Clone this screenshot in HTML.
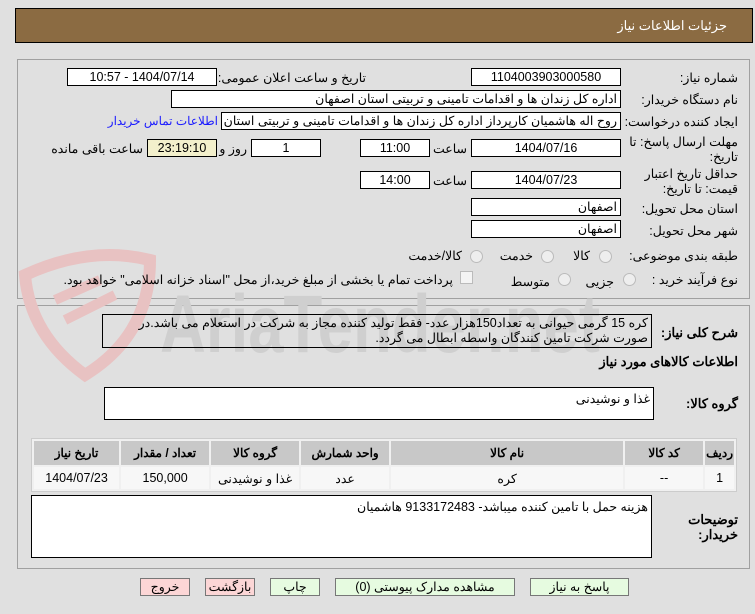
<!DOCTYPE html>
<html><head><meta charset="utf-8"><style>
body{margin:0;width:755px;height:614px;background:#e0e0e0;font-family:Tahoma,"Liberation Sans","Noto Sans CJK SC",sans-serif;font-size:12px;color:#000;position:relative;overflow:hidden;direction:rtl}
.a{position:absolute}
.hdr{left:15px;top:8px;width:738px;height:35px;background:#8b6b42;border:1px solid #000;box-sizing:border-box}
.hdr span{position:absolute;right:25px;top:9px;color:#fff;font-size:13px}
.pn{border:1px solid #a0a0a0;box-sizing:border-box}
.bx{position:absolute;background:#fff;border:1px solid #000;box-sizing:border-box;height:18px;line-height:16px;font-size:12.5px;padding:0 3px;white-space:nowrap;overflow:hidden}
.c{text-align:center}
.l{position:absolute;white-space:nowrap;font-size:12.5px}
.rad{position:absolute;width:11px;height:11px;border-radius:50%;border:1px solid #bbb;background:#eee}
.btn{position:absolute;top:578px;height:18px;border:1px solid #777;box-sizing:border-box;text-align:center;line-height:16px;font-size:12.5px}
table{position:absolute;left:31px;top:438px;width:706px;border-collapse:separate;border-spacing:2px;background:#f0f0f0;border:1px solid #ccc}
th{background:#c8c8c8;height:22px;font-size:12px}
td{background:#f7f7f7;height:20px;text-align:center;font-size:12.5px}
.b{font-weight:bold}
</style></head><body>
<div class="a hdr"><span>جزئیات اطلاعات نیاز</span></div>
<div class="a pn" style="left:17px;top:59px;width:733px;height:240px"></div>
<div class="a pn" style="left:17px;top:305px;width:733px;height:264px"></div>
<svg class="a" style="left:0;top:240px;direction:ltr" width="640" height="150">
<path d="M25 35 Q90 5 150 20 Q150 95 85 135 Q30 95 25 35Z" fill="none" stroke="#e8c2c2" stroke-width="12"/>
<path d="M55 60 L100 40 M65 80 L115 55" stroke="#e8c2c2" stroke-width="10"/>
<text x="160" y="112" font-size="82" fill="#cfcfcf" font-family="Liberation Sans" font-weight="bold" textLength="440" lengthAdjust="spacingAndGlyphs">AriaTender.net</text>
</svg>

<div class="l" style="right:17px;top:70px">شماره نیاز:</div>
<div class="bx c" style="left:471px;top:68px;width:150px">1104003903000580</div>
<div class="l" style="right:389px;top:70px">تاریخ و ساعت اعلان عمومی:</div>
<div class="bx c" style="left:67px;top:68px;width:150px">1404/07/14 - 10:57</div>

<div class="l" style="right:17px;top:92px">نام دستگاه خریدار:</div>
<div class="bx" style="left:171px;top:90px;width:450px">اداره کل زندان ها و اقدامات تامینی و تربیتی استان اصفهان</div>

<div class="l" style="right:17px;top:114px">ایجاد کننده درخواست:</div>
<div class="bx" style="left:221px;top:112px;width:400px">روح اله هاشمیان کارپرداز اداره کل زندان ها و اقدامات تامینی و تربیتی استان اصفهان</div>
<div class="l" style="right:537px;top:114px;color:#1a1aff;font-size:12px">اطلاعات تماس خریدار</div>

<div class="l" style="right:17px;top:135px;line-height:15px">مهلت ارسال پاسخ: تا<br>تاریخ:</div>
<div class="bx c" style="left:471px;top:139px;width:150px">1404/07/16</div>
<div class="l" style="right:288px;top:141px">ساعت</div>
<div class="bx c" style="left:360px;top:139px;width:70px">11:00</div>
<div class="bx c" style="left:251px;top:139px;width:70px">1</div>
<div class="l" style="right:508px;top:141px">روز و</div>
<div class="bx c" style="left:147px;top:139px;width:70px;background:#f3f0cc">23:19:10</div>
<div class="l" style="right:612px;top:141px">ساعت باقی مانده</div>

<div class="l" style="right:17px;top:167px;line-height:15px">حداقل تاریخ اعتبار<br>قیمت: تا تاریخ:</div>
<div class="bx c" style="left:471px;top:171px;width:150px">1404/07/23</div>
<div class="l" style="right:288px;top:173px">ساعت</div>
<div class="bx c" style="left:360px;top:171px;width:70px">14:00</div>

<div class="l" style="right:17px;top:201px">استان محل تحویل:</div>
<div class="bx" style="left:471px;top:198px;width:150px">اصفهان</div>
<div class="l" style="right:17px;top:223px">شهر محل تحویل:</div>
<div class="bx" style="left:471px;top:220px;width:150px">اصفهان</div>

<div class="l" style="right:17px;top:248px">طبقه بندی موضوعی:</div>
<div class="rad" style="left:599px;top:250px"></div><div class="l" style="right:165px;top:248px">کالا</div>
<div class="rad" style="left:541px;top:250px"></div><div class="l" style="right:222px;top:248px">خدمت</div>
<div class="rad" style="left:470px;top:250px"></div><div class="l" style="right:293px;top:248px">کالا/خدمت</div>

<div class="l" style="right:17px;top:272px">نوع فرآیند خرید :</div>
<div class="rad" style="left:623px;top:273px"></div><div class="l" style="right:141px;top:274px">جزیی</div>
<div class="rad" style="left:558px;top:273px"></div><div class="l" style="right:205px;top:274px">متوسط</div>
<div class="a" style="left:460px;top:271px;width:11px;height:11px;border:1px solid #bbb;background:#f4f4f4"></div>
<div class="l" style="right:302px;top:272px">پرداخت تمام یا بخشی از مبلغ خرید،از محل "اسناد خزانه اسلامی" خواهد بود.</div>

<div class="l b" style="right:17px;top:325px;font-size:13px">شرح کلی نیاز:</div>
<div class="bx" style="left:102px;top:314px;width:550px;height:34px;white-space:normal;background:transparent;line-height:15px;padding-top:1px">کره 15 گرمی حیوانی به تعداد150هزار عدد- فقط تولید کننده مجاز به شرکت در استعلام می باشد.در صورت شرکت تامین کنندگان واسطه ابطال می گردد.</div>
<div class="l b" style="right:17px;top:354px;font-size:13px">اطلاعات کالاهای مورد نیاز</div>
<div class="l b" style="right:17px;top:396px;font-size:13px">گروه کالا:</div>
<div class="bx" style="left:104px;top:387px;width:550px;height:33px;padding-top:3px">غذا و نوشیدنی</div>

<table><tr><th style="width:26px">ردیف</th><th style="width:76px">کد کالا</th><th style="width:230px">نام کالا</th><th style="width:86px">واحد شمارش</th><th style="width:86px">گروه کالا</th><th style="width:86px">تعداد / مقدار</th><th>تاریخ نیاز</th></tr>
<tr><td>1</td><td>--</td><td>کره</td><td>عدد</td><td>غذا و نوشیدنی</td><td>150,000</td><td>1404/07/23</td></tr></table>

<div class="l b" style="right:17px;top:512px;font-size:13px;line-height:15px">توضیحات<br>خریدار:</div>
<div class="bx" style="left:31px;top:495px;width:621px;height:63px;padding-top:3px">هزینه حمل با تامین کننده میباشد- 9133172483 هاشمیان</div>

<div class="btn" style="left:140px;width:50px;background:#fcd6d6">خروج</div>
<div class="btn" style="left:205px;width:50px;background:#fcd6d6">بازگشت</div>
<div class="btn" style="left:270px;width:50px;background:#e6fbe0">چاپ</div>
<div class="btn" style="left:335px;width:180px;background:#e6fbe0">مشاهده مدارک پیوستی (0)</div>
<div class="btn" style="left:530px;width:99px;background:#e6fbe0">پاسخ به نیاز</div>
</body></html>
